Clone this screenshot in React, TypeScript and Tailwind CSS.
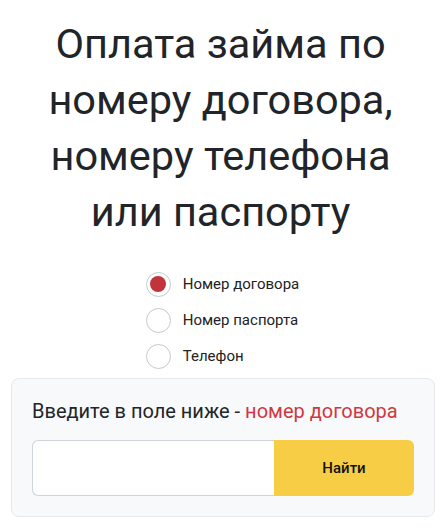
import React, { useState } from 'react';

const options = [
    { id: 'contract', label: 'Номер договора', hint: 'номер договора' },
    { id: 'passport', label: 'Номер паспорта', hint: 'номер паспорта' },
    { id: 'phone', label: 'Телефон', hint: 'номер телефона' }
];

const App = () => {
    const [selected, setSelected] = useState('contract');
    const current = options.find(o => o.id === selected)!;

    return (
        <div className="min-h-screen bg-white pt-4 font-['Roboto',sans-serif] text-[#212529]">
            <h1 className="text-center text-[41.5px] leading-[56px] font-normal">
                Оплата займа по<br />
                номеру договора,<br />
                номеру телефона<br />
                или паспорту
            </h1>

            <div className="mt-[26px] flex flex-col items-center">
                <div className="flex flex-col pl-[4px]">
                    {options.map(o => (
                        <label key={o.id} className="flex h-9 cursor-pointer items-center gap-3" onClick={() => setSelected(o.id)}>
                            <span className="flex h-[25px] w-[25px] items-center justify-center rounded-full border border-[#c8c8c8] bg-white">
                                {selected === o.id && <span className="h-[16px] w-[16px] rounded-full bg-[#c1343e]" />}
                            </span>
                            <span className="text-[15px] text-[#222]">{o.label}</span>
                        </label>
                    ))}
                </div>
            </div>

            <div className="mt-1 ml-[11px] mr-[6px] rounded-lg border border-[#e6e8eb] bg-[#f8f9fa] px-5 pt-[20px] pb-5">
                <p className="text-[20px] leading-6 text-[#212529]">
                    Введите в поле ниже - <span className="text-[#d0383f]">{current.hint}</span>
                </p>
                <div className="mt-[17px] flex h-14">
                    <input className="min-w-0 flex-1 rounded-l-md border border-r-0 border-[#ced4da] bg-white px-3 outline-none" />
                    <button className="w-[140px] rounded-r-md bg-[#f6cd45] text-[15px] font-medium text-[#111]">Найти</button>
                </div>
            </div>
        </div>
    );
};

export default App;
